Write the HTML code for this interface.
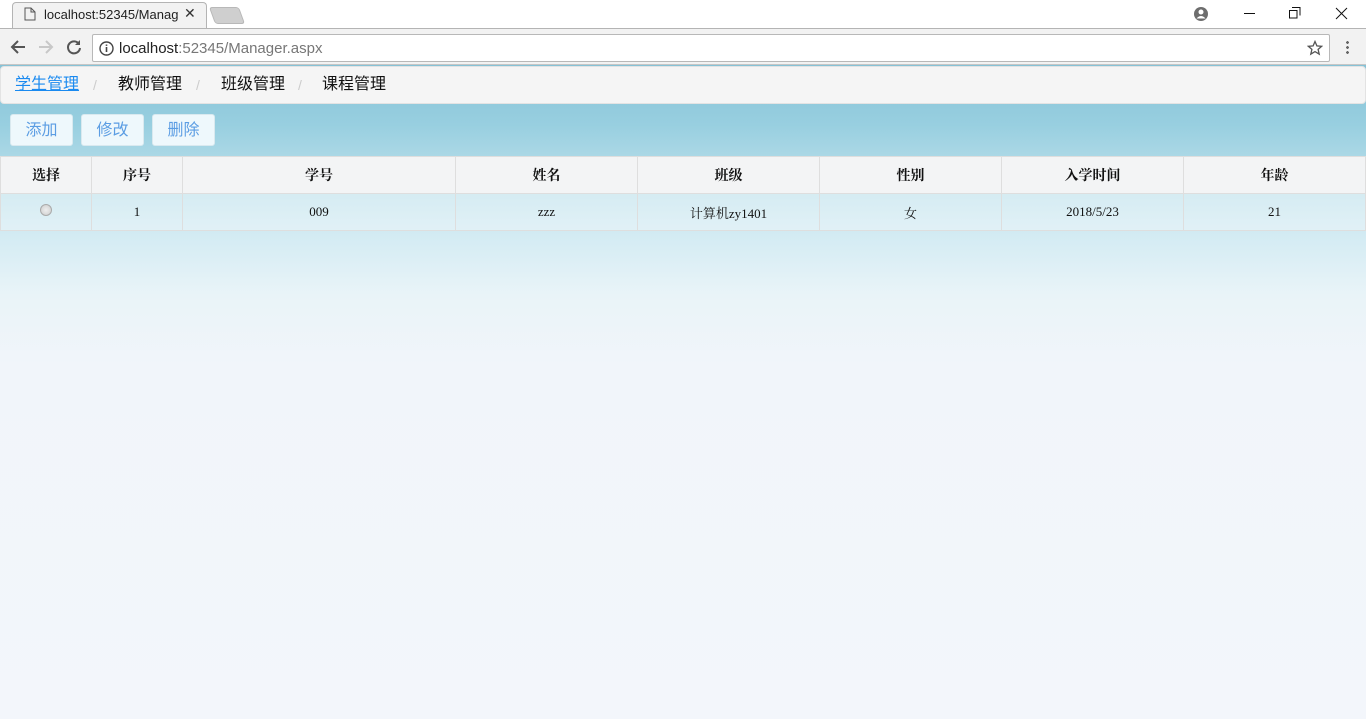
<!DOCTYPE html>
<html><head><meta charset="utf-8"><style>
*{margin:0;padding:0;box-sizing:border-box}
body{width:1366px;height:719px;overflow:hidden;font-family:"Liberation Sans","Noto Sans CJK SC",sans-serif;background:#f3f6fb;position:relative}
.tabbar{position:absolute;left:0;top:0;width:1366px;height:28px;background:#fff}
.tab{position:absolute;left:12px;top:2px;width:195px;height:27px;background:#f2f2f2;border:1px solid #b4b4b4;border-bottom:none;border-radius:4px 4px 0 0}
.tabtxt{position:absolute;left:44px;top:7px;font-size:13px;color:#222}
.tool{position:absolute;left:0;top:28px;width:1366px;height:37px;background:#f2f2f2;border-top:1px solid #b4b4b4;border-bottom:1px solid #c6c6c6}
.url{position:absolute;left:92px;top:5px;width:1238px;height:28px;background:#fff;border:1px solid #b8b8b8;border-radius:2px}
.url span{position:absolute;left:26px;top:5px;font-size:15px;color:#222}
.page{position:absolute;left:0;top:65px;width:1366px;height:654px;background:linear-gradient(#86c2d6 0px,#98cfe0 60px,#b6dde9 110px,#d3ebf3 170px,#e9f4f8 230px,#f1f5fa 300px,#f3f6fb 654px)}
.nav{position:absolute;left:0;top:1px;width:1366px;height:38px;background:#f5f5f5;border-radius:4px;border:1px solid #e3e3e3}
.nav a{position:absolute;top:8px;font-size:16px;line-height:20px;color:#111;text-decoration:none}
.nav i{position:absolute;top:10px;color:#ccc;font-style:normal;font-size:14px;line-height:16px}
.btn{position:absolute;top:49px;height:32px;width:63px;background:#eef8fc;border:1px solid #d9e9ef;border-radius:3px;color:#5b9de3;font-size:16px;text-align:center;line-height:32px}
table{position:absolute;left:0;top:91px;width:1366px;border-collapse:collapse;font-family:"Liberation Serif","Noto Serif CJK SC",serif;font-size:13px;color:#111}
td,th{border:1px solid #dedede;height:37px;text-align:center}
th{background:rgba(245,245,245,.97);font-weight:bold;font-size:14px}
tr.r td{background:rgba(255,255,255,.35)}
.radio{display:inline-block;width:12px;height:12px;border-radius:50%;border:1px solid #aaa;background:radial-gradient(#eee,#ccc)}
</style></head><body>
<div class="tabbar">
<div class="tab"></div>
<svg style="position:absolute;left:24px;top:7px" width="12" height="14"><path d="M1 1h6l4 4v8H1z M7 1v4h4" fill="none" stroke="#555"/></svg>
<div class="tabtxt">localhost:52345/Manag</div>
<div style="position:absolute;left:184px;top:5px;font-size:14px;color:#333">✕</div>
<div style="position:absolute;left:212px;top:7px;width:30px;height:17px;background:#cfcfcf;border:1px solid #b8b8b8;border-radius:3px;transform:skewX(20deg)"></div>
<svg style="position:absolute;left:1193px;top:6px" width="16" height="16"><circle cx="8" cy="8" r="7" fill="#6d6d6d"/><circle cx="8" cy="6" r="2.5" fill="#fff"/><path d="M3.5 12.5q4.5-5 9 0" fill="#fff"/></svg>
<div style="position:absolute;left:1244px;top:13px;width:11px;height:1px;background:#111"></div>
<svg style="position:absolute;left:1289px;top:7px" width="12" height="12"><path d="M3 .5h8v8M.5 3.5h7.5v7.5H.5z" fill="none" stroke="#111"/></svg>
<svg style="position:absolute;left:1335px;top:7px" width="13" height="13"><path d="M1 1l11 11M12 1L1 12" stroke="#111"/></svg>
</div>
<div class="tool">
<svg style="position:absolute;left:9px;top:10px" width="18" height="16"><path d="M16 8H3M9 2L3 8l6 6" fill="none" stroke="#555" stroke-width="2"/></svg>
<svg style="position:absolute;left:37px;top:10px" width="18" height="16"><path d="M2 8h13M9 2l6 6-6 6" fill="none" stroke="#c8c8c8" stroke-width="2"/></svg>
<svg style="position:absolute;left:65px;top:9px" width="18" height="18"><path d="M14 6A6 6 0 1 0 15 10" fill="none" stroke="#555" stroke-width="2"/><path d="M15 2v5h-5z" fill="#555"/></svg>
<div class="url"><svg style="position:absolute;left:6px;top:6px" width="15" height="15"><circle cx="7.5" cy="7.5" r="6.5" fill="none" stroke="#444" stroke-width="1.4"/><path d="M7.5 6v5M7.5 3.5v1.4" stroke="#444" stroke-width="1.6"/></svg><span>localhost<span style="position:static;color:#777">:52345/Manager.aspx</span></span>
<svg style="position:absolute;right:6px;top:5px" width="16" height="16"><path d="M8 1.5l1.9 4.4 4.8.4-3.6 3.1 1.1 4.7L8 11.6l-4.2 2.5 1.1-4.7L1.3 6.3l4.8-.4z" fill="none" stroke="#555" stroke-width="1.3"/></svg></div>
<div style="position:absolute;left:1346px;top:11px;width:3px;height:15px;background:radial-gradient(circle,#666 1.3px,transparent 1.5px) 0 0/3px 5px"></div>
</div>
<div class="page">
<div class="nav">
<a style="left:14px;color:#1a8af0;text-decoration:underline">学生管理</a><i style="left:92px">/</i>
<a style="left:117px">教师管理</a><i style="left:195px">/</i>
<a style="left:220px">班级管理</a><i style="left:297px">/</i>
<a style="left:321px">课程管理</a>
</div>
<div class="btn" style="left:10px">添加</div>
<div class="btn" style="left:81px">修改</div>
<div class="btn" style="left:152px">删除</div>
<table>
<tr><th style="width:91px">选择</th><th style="width:91px">序号</th><th style="width:273px">学号</th><th style="width:182px">姓名</th><th style="width:182px">班级</th><th style="width:182px">性别</th><th style="width:182px">入学时间</th><th>年龄</th></tr>
<tr class="r"><td><span class="radio"></span></td><td>1</td><td>009</td><td>zzz</td><td>计算机zy1401</td><td>女</td><td>2018/5/23</td><td>21</td></tr>
</table>
</div>
</body></html>
